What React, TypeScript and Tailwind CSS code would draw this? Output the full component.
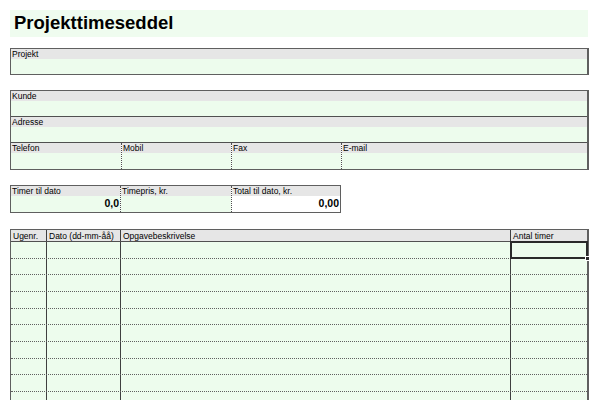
import React from 'react';

const labelRow = 'h-[10px] bg-[#e6e6e6] pl-[1px] text-[8.5px] leading-[11px] text-black';
const greenRow = 'bg-[#edfced]';

const tableCols = [
  { label: 'Ugenr.', width: 'w-[36px]' },
  { label: 'Dato (dd-mm-åå)', width: 'w-[74px]' },
  { label: 'Opgavebeskrivelse', width: 'w-[390px]' },
  { label: 'Antal timer', width: 'flex-1' },
];

const rows = Array.from({ length: 10 }, (_, i) => i);

function Section({ label, last }: { label: string; last?: boolean }) {
  return (
    <div className={last ? '' : 'border-b border-[#505050]'}>
      <div className={labelRow}>{label}</div>
      <div className={`h-[15px] ${greenRow}`} />
    </div>
  );
}

export default function App() {
  return (
    <div className="h-[400px] w-[600px] overflow-hidden bg-white pl-[10px] pt-[10px] font-['Liberation_Sans',Arial,sans-serif] text-black">
      <div className="flex h-[27px] w-[578px] items-center bg-[#effcef] pl-[4px] text-[18.5px] font-bold leading-none">
        Projekttimeseddel
      </div>

      <div className="mt-[11px] w-[579px] border border-r-2 border-[#5f5f5f]">
        <Section label="Projekt" last />
      </div>

      <div className="mt-[15px] w-[579px] border border-r-2 border-[#5f5f5f]">
        <Section label="Kunde" />
        <Section label="Adresse" />
        <div className="flex">
          {[
            { label: 'Telefon', width: 'w-[110px]' },
            { label: 'Mobil', width: 'w-[110px]' },
            { label: 'Fax', width: 'w-[110px]' },
            { label: 'E-mail', width: 'flex-1' },
          ].map((c, i) => (
            <div key={c.label} className={`${c.width} ${i > 0 ? 'border-l border-dotted border-[#505050]' : ''}`}>
              <div className={labelRow}>{c.label}</div>
              <div className={`h-[16px] ${greenRow}`} />
            </div>
          ))}
        </div>
      </div>

      <div className="mt-[15px] flex w-[331px] border border-[#5f5f5f]">
        <div className="w-[109px]">
          <div className={labelRow}>Timer til dato</div>
          <div className={`flex h-[16px] items-center justify-end pr-[1px] text-[10.5px] font-bold ${greenRow}`}>0,0</div>
        </div>
        <div className="w-[111px] border-l border-dotted border-[#505050]">
          <div className={labelRow}>Timepris, kr.</div>
          <div className={`h-[16px] ${greenRow}`} />
        </div>
        <div className="flex-1 border-l border-dotted border-[#505050]">
          <div className={labelRow}>Total til dato, kr.</div>
          <div className="flex h-[16px] items-center justify-end bg-white pr-[1px] text-[10.5px] font-bold">0,00</div>
        </div>
      </div>

      <div className="mt-[16px] w-[579px] border border-r-2 border-b-0 border-[#5f5f5f]">
        <div className="flex h-[12px] border-b border-[#505050] bg-[#e6e6e6]">
          {tableCols.map((c, i) => (
            <div
              key={c.label}
              className={`${c.width} pl-[2px] text-[8.5px] leading-[12px] ${i < 3 ? 'border-r border-[#404040]' : ''}`}
            >
              {c.label}
            </div>
          ))}
        </div>
        {rows.map((r) => (
          <div key={r} className={`flex h-[16.67px] border-b border-dotted border-[#606060] ${greenRow}`}>
            {tableCols.map((c, i) => (
              <div key={c.label} className={`${c.width} relative ${i < 3 ? 'border-r border-solid border-[#404040]' : ''}`}>
                {r === 0 && i === 3 && (
                  <div className="absolute inset-[-1px] border-2 border-[#2a2a2a]">
                    <div className="absolute right-[-4px] bottom-[-4px] h-[5px] w-[5px] border border-white bg-[#2a2a2a]" />
                  </div>
                )}
              </div>
            ))}
          </div>
        ))}
      </div>
    </div>
  );
}
